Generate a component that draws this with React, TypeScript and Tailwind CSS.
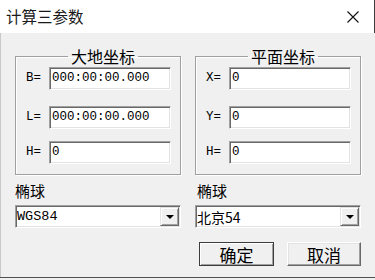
import React from 'react';

const cjk = "font-['Noto_Sans_CJK_SC',sans-serif]";
const mono = "font-['Liberation_Mono','Noto_Sans_CJK_SC',monospace]";

/* 凹陷的输入框边框 */
const sunken =
  'border border-t-[#a0a0a0] border-l-[#a0a0a0] border-r-white border-b-white shadow-[inset_1px_1px_0_#696969,inset_-1px_-1px_0_#e3e3e3] bg-white';

function Field({ label, value, mt }: { label: string; value: string; mt: string }) {
  return (
    <div className={`flex items-center ${mt}`}>
      <span className={`w-[23px] text-[12.5px] leading-none text-black ${mono}`}>{label}</span>
      <div className={`flex h-[23px] w-[122px] items-center pl-[2px] ${sunken}`}>
        <span className={`text-[12.5px] leading-none text-black ${mono}`}>{value}</span>
      </div>
    </div>
  );
}

function Group({ title, rows }: { title: string; rows: [string, string][] }) {
  return (
    <fieldset className="w-[166px] border border-[#a0a0a0] pb-[10px] pl-[10px] shadow-[inset_1px_1px_0_#fff,1px_1px_0_#fff]">
      <legend className={`mx-auto px-[3px] text-[16px] leading-[18px] text-black ${cjk}`}>{title}</legend>
      <Field label={rows[0][0]} value={rows[0][1]} mt="mt-[2px]" />
      <Field label={rows[1][0]} value={rows[1][1]} mt="mt-[16px]" />
      <Field label={rows[2][0]} value={rows[2][1]} mt="mt-[12px]" />
    </fieldset>
  );
}

function Combo({ value, cn }: { value: string; cn?: boolean }) {
  return (
    <div className={`flex h-[23px] w-[166px] items-center justify-between ${sunken}`}>
      <span className={`pl-[1px] leading-none text-black ${cn ? `text-[14px] ${cjk}` : `text-[13.5px] ${mono}`}`}>
        {value}
      </span>
      <div className="mr-[1px] flex h-[19px] w-[19px] items-center justify-center border border-t-[#e3e3e3] border-l-[#e3e3e3] border-r-[#696969] border-b-[#696969] bg-[#f0f0f0] shadow-[inset_1px_1px_0_#fff,inset_-1px_-1px_0_#a0a0a0]">
        <div className="h-0 w-0 border-x-[4px] border-t-[4px] border-x-transparent border-t-black" />
      </div>
    </div>
  );
}

function Btn({ text, def }: { text: string; def?: boolean }) {
  return (
    <button
      className={`flex h-[24px] items-center justify-center border bg-[#f0f0f0] text-[17px] leading-none text-black ${cjk} ${
        def
          ? 'w-[75px] border-[#3c3c3c] shadow-[inset_1px_1px_0_#fff,inset_-1px_-1px_0_#a0a0a0]'
          : 'w-[74px] border-t-white border-l-white border-r-[#696969] border-b-[#696969] shadow-[inset_-1px_-1px_0_#a0a0a0,inset_1px_1px_0_#e3e3e3]'
      }`}
    >
      {text}
    </button>
  );
}

export default function App() {
  return (
    <div className="h-[280px] w-[375px] bg-[#f0f0f0]">
      <div className="flex h-[278px] w-[375px] flex-col border-b border-[#505050]">
        {/* 标题栏 */}
        <div className="flex h-[33px] items-center justify-between border-r border-[#3c3c3c] bg-white pl-[6px]">
          <span className={`text-[15.5px] leading-none text-[#1a1a1a] ${cjk}`}>计算三参数</span>
          <svg width="12" height="12" viewBox="0 0 12 12" className="mr-[15px]">
            <path d="M0.5 0.5L11.5 11.5M11.5 0.5L0.5 11.5" stroke="#111" strokeWidth="1.1" />
          </svg>
        </div>

        {/* 主体 */}
        <div className="flex flex-1 flex-col border-l border-[#c8c8c8] pl-[14px] pt-[14px]">
          <div className="flex gap-[14px]">
            <Group
              title="大地坐标"
              rows={[
                ['B=', '000:00:00.000'],
                ['L=', '000:00:00.000'],
                ['H=', '0'],
              ]}
            />
            <Group
              title="平面坐标"
              rows={[
                ['X=', '0'],
                ['Y=', '0'],
                ['H=', '0'],
              ]}
            />
          </div>

          <div className="mt-[7px] flex gap-[14px]">
            <div className="flex flex-col">
              <span className={`text-[15px] leading-[18px] text-black ${cjk}`}>椭球</span>
              <div className="mt-[5px]">
                <Combo value="WGS84" />
              </div>
            </div>
            <div className="flex flex-col">
              <span className={`pl-[2px] text-[15px] leading-[18px] text-black ${cjk}`}>椭球</span>
              <div className="mt-[5px]">
                <Combo value="北京54" cn />
              </div>
            </div>
          </div>

          <div className="mt-[14px] flex w-[346px] justify-end gap-[13px]">
            <Btn text="确定" def />
            <Btn text="取消" />
          </div>
        </div>
      </div>
    </div>
  );
}
